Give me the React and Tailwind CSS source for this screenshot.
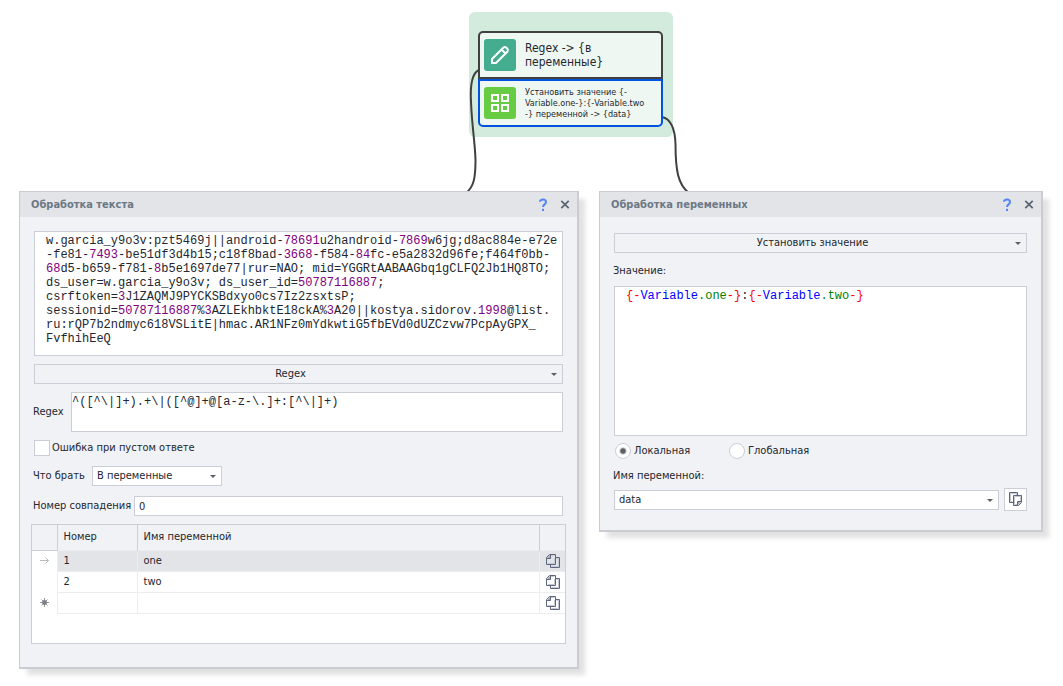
import { useState } from "react";
import clsx from "clsx";

const ACCOUNT_LINES = [
  "w.garcia_y9o3v:pzt5469j||android-78691u2handroid-7869w6jg;d8ac884e-e72e",
  "-fe81-7493-be51df3d4b15;c18f8bad-3668-f584-84fc-e5a2832d96fe;f464f0bb-",
  "68d5-b659-f781-8b5e1697de77|rur=NAO; mid=YGGRtAABAAGbq1gCLFQ2Jb1HQ8TO;",
  "ds_user=w.garcia_y9o3v; ds_user_id=50787116887;",
  "csrftoken=3J1ZAQMJ9PYCKSBdxyo0cs7Iz2zsxtsP;",
  "sessionid=50787116887%3AZLEkhbktE18ckA%3A20||kostya.sidorov.1998@list.",
  "ru:rQP7b2ndmyc618VSLitE|hmac.AR1NFz0mYdkwtiG5fbEVd0dUZCzvw7PcpAyGPX_",
  "FvfhihEeQ"
];

const VARIABLES = [
  { id: 1, name: "one" },
  { id: 2, name: "two" }
];

const App = () => (
  <div className="min-h-screen bg-white font-['DejaVu_Sans_Condensed','DejaVu_Sans',sans-serif] text-[11px] leading-4 text-[#23272f]">
    <div className="pt-3 h-[191px] pl-[469px]">
      <NodeGroup />
    </div>

    <main className="relative grid grid-cols-[140fr_111fr] items-start gap-5 pl-[19px] pr-5">
      <TextPanel />
      <VariablePanel />
    </main>
  </div>
);

/* ---------------- DIAGRAM ---------------- */
const NodeGroup = () => (
  <div className="relative w-[204px] rounded-md bg-[#d3ebdd] pt-[19px] pb-[10px] pl-[9px] pr-[10px]">
    <svg
      className="absolute left-0 top-0 overflow-visible"
      width="204"
      height="180"
      fill="none"
      stroke="#404040"
      strokeWidth="2"
      aria-hidden="true"
    >
      <path d="M10 58C3 61 1 72 2 90C3 115 6 130 6.500 148C6.500 165 5 175 -3 181" />
      <path d="M193 105C202 107 206 117 206.500 132C206.500 158 209 173 220 181" />
    </svg>

    <div className="relative flex h-12 items-center gap-[9px] rounded-t-[5px] border-2 border-[#404040] bg-[#eef7f2] pl-1">
      <span className="flex size-8 shrink-0 items-center justify-center rounded-[3px] bg-[#44ad8f]">
        <svg width="20" height="20" viewBox="0 0 20 20" fill="none" stroke="#fff" strokeWidth="2" aria-hidden="true">
          <path d="M2 18V14L13.500 2.500Q15 1.500 16.500 2.800L17.300 3.600Q18.500 5 17.500 6.500L6 18ZM11.500 4.500L15.500 8.500" />
        </svg>
      </span>
      <p className="text-xs leading-[14px]">
        Regex -&gt; {"{в"}
        <br />
        {"переменные}"}
      </p>
    </div>

    <div className="relative flex h-12 items-center gap-[9px] rounded-b-[5px] border-2 border-[#0052e0] bg-[#eef7f2] pl-1">
      <span className="flex size-8 shrink-0 items-center justify-center rounded-[3px] bg-[#67cb43]">
        <svg width="18" height="18" viewBox="0 0 18 18" fill="none" stroke="#fff" strokeWidth="2" aria-hidden="true">
          <path d="M1 1H7V7H1ZM11 1H17V7H11ZM1 11H7V17H1ZM11 11H17V17H11Z" />
        </svg>
      </span>
      <p className="whitespace-nowrap text-[9px] leading-[11px]">
        {"Установить значение {-"}
        <br />
        {"Variable.one-}:{-Variable.two"}
        <br />
        {"-} переменной -> {data}"}
      </p>
    </div>
  </div>
);

/* ---------------- LEFT WINDOW ---------------- */
const TextPanel = () => {
  const [regex, setRegex] = useState("^([^\\|]+).+\\|([^@]+@[a-z-\\.]+:[^\\|]+)");
  const [match, setMatch] = useState("0");

  return (
    <Panel title="Обработка текста">
      <div className="px-[14px] pt-[14px] pb-[23px]">
        <CodeBox label="Текст" className="h-[125px] pt-[2px]">
          {ACCOUNT_LINES.map(line => (
            <div key={line}>{highlightNumbers(line)}</div>
          ))}
        </CodeBox>

        <Select label="Действие" options={["Regex"]} centered className="mt-2" />

        <div className="mt-2 flex items-center">
          <label htmlFor="regex" className="-ml-px w-[38px]">Regex</label>
          <textarea
            id="regex"
            value={regex}
            onChange={e => setRegex(e.target.value)}
            className="block h-10 min-w-0 flex-1 resize-none border border-[#cbced6] bg-white pt-[2px] font-['Liberation_Mono',monospace] text-xs leading-[14px] outline-none"
          />
        </div>

        <label className="mt-2 flex items-center gap-[2px]">
          <input type="checkbox" className="size-4 appearance-none border border-[#cbced6] bg-white checked:bg-[#5b6270]" />
          Ошибка при пустом ответе
        </label>

        <div className="mt-[10px] flex items-center">
          <label htmlFor="take" className="-ml-px w-[59px]">Что брать</label>
          <Select id="take" options={["В переменные", "В список"]} className="w-[130px] bg-white" />
        </div>

        <div className="mt-[10px] flex items-center">
          <label htmlFor="match" className="-ml-px w-[101px] whitespace-nowrap">Номер совпадения</label>
          <input
            id="match"
            value={match}
            onChange={e => setMatch(e.target.value)}
            className="h-5 min-w-0 flex-1 border border-[#cbced6] bg-white px-1 outline-none"
          />
        </div>

        <VariableTable />
      </div>
    </Panel>
  );
};

const VariableTable = () => (
  <div className="-mx-[3px] mt-2 h-[120px] border border-[#cbced6] bg-white">
    <table className="w-full table-fixed border-collapse text-left">
      <colgroup>
        <col className="w-[25px]" />
        <col className="w-20" />
        <col />
        <col className="w-[26px]" />
      </colgroup>
      <thead>
        <tr className="h-[25px] border-b border-[#cbced6] bg-[#f1f2f6]">
          <th className="border-r border-[#cbced6]" />
          <th className="border-r border-[#cbced6] px-[6px] font-normal">Номер</th>
          <th className="border-r border-[#cbced6] px-[6px] font-normal">Имя переменной</th>
          <th />
        </tr>
      </thead>
      <tbody>
        {VARIABLES.map((item, i) => (
          <Row key={item.id} item={item} active={i === 0} marker={i === 0 && <ArrowMark />} />
        ))}
        <Row marker={<NewMark />} />
      </tbody>
    </table>
  </div>
);

const Row = ({ item, active, marker }) => {
  const cell = clsx("border border-[#ecedf0] px-[6px] leading-4", active && "bg-[#e3e4e8]");

  return (
    <tr className="h-[21px]">
      <td className="p-0"><span className="flex justify-center">{marker}</span></td>
      <td className={cell}>{item?.id}</td>
      <td className={cell}>{item?.name}</td>
      <td className={clsx("border-y border-[#ecedf0] p-0", active && "bg-[#e3e4e8]")}>
        <button type="button" aria-label="Копировать" className="flex w-full pl-[6px]">
          <PagesIcon />
        </button>
      </td>
    </tr>
  );
};

/* ---------------- RIGHT WINDOW ---------------- */
const VariablePanel = () => {
  const [scope, setScope] = useState("local");

  return (
    <Panel title="Обработка переменных">
      <div className="px-[14px] pt-4 pb-[19px]">
        <Select label="Действие" options={["Установить значение"]} centered />

        <p className="-ml-px mt-[10px]">Значение:</p>
        <CodeBox label="Значение" className="mt-[7px] h-[150px] pt-[2px]">
          <Macro name="one" />:<Macro name="two" />
        </CodeBox>

        <div className="mt-[7px] flex pl-px">
          <Radio name="scope" checked={scope === "local"} onChange={() => setScope("local")} className="w-[114px]">
            Локальная
          </Radio>
          <Radio name="scope" checked={scope === "global"} onChange={() => setScope("global")}>
            Глобальная
          </Radio>
        </div>

        <label htmlFor="variable" className="-ml-px mt-[9px] block">Имя переменной:</label>
        <div className="mt-1 flex items-center gap-[5px]">
          <Select id="variable" options={["data"]} className="flex-1 bg-white" />
          <button
            type="button"
            aria-label="Вставить"
            className="flex size-[23px] items-center justify-center border border-[#cbced6] bg-white"
          >
            <PasteIcon />
          </button>
        </div>
      </div>
    </Panel>
  );
};

/* ---------------- SHARED ---------------- */
const Panel = ({ title, children }) => (
  <section className="min-w-0 border border-r-2 border-b-2 border-[#cbccd2] bg-[#f1f2f6] shadow-[7px_7px_5px_-1px_rgba(0,0,0,0.12)]">
    <header className="flex h-[25px] items-center justify-between bg-[#e3e4e8] pl-[11px] pr-[7px]">
      <h2 className="font-bold text-[#6c7885]">{title}</h2>
      <div className="flex items-center gap-3">
        <button type="button" aria-label="Справка">
          <svg width="10" height="14" viewBox="0 0 10 14" fill="none" stroke="#5286f5" strokeWidth="2" aria-hidden="true">
            <path d="M2 3.800C2 0.800 8 0.800 8 4C8 6.500 5 6.200 5 9M5 10.800V13" />
          </svg>
        </button>
        <button type="button" aria-label="Закрыть">
          <svg width="10" height="10" viewBox="0 0 10 10" fill="none" stroke="#5b6473" strokeWidth="1.700" aria-hidden="true">
            <path d="M1.300 0.800L8.700 8.200M8.700 0.800L1.300 8.200" />
          </svg>
        </button>
      </div>
    </header>
    {children}
  </section>
);

const CodeBox = ({ label, className, children }) => (
  <div
    role="textbox"
    aria-label={label}
    aria-multiline="true"
    contentEditable
    suppressContentEditableWarning
    spellCheck={false}
    className={clsx(
      "overflow-hidden whitespace-pre border border-[#cbced6] bg-white pl-[11px] font-['Liberation_Mono',monospace] text-xs leading-[14px] outline-none",
      className
    )}
  >
    {children}
  </div>
);

const Select = ({ id, label, options, centered, className }) => (
  <div className={clsx("relative h-5 border border-[#cbced6]", className)}>
    <select
      id={id}
      aria-label={label}
      className={clsx(
        "block h-full w-full appearance-none bg-transparent pl-1 pr-5 outline-none",
        centered && "[text-align-last:center]"
      )}
    >
      {options.map(option => (
        <option key={option}>{option}</option>
      ))}
    </select>
    <svg className="pointer-events-none absolute right-[5px] top-2" width="6" height="3" viewBox="0 0 6 3" fill="#5b6068" aria-hidden="true">
      <path d="M0 0H6L3 3Z" />
    </svg>
  </div>
);

const Radio = ({ className, children, ...props }) => (
  <label className={clsx("flex items-center gap-[3px]", className)}>
    <input
      type="radio"
      {...props}
      className="size-4 appearance-none rounded-full border border-[#cbced6] bg-white checked:bg-[radial-gradient(circle,#5b6068_2px,#fff_4px)]"
    />
    {children}
  </label>
);

const Macro = ({ name }) => (
  <span className="text-[#008000]">
    <span className="text-[#ff0000]">{"{-"}</span>
    <span className="text-[#0000ff]">Variable</span>.{name}
    <span className="text-[#ff0000]">{"-}"}</span>
  </span>
);

// numbers are coloured only at the start of a token
const highlightNumbers = line =>
  line.split(/((?<!\w)\d+)/).map((part, i) => (
    i % 2 ? <span key={i} className="text-[#800080]">{part}</span> : part
  ));

/* ---------------- ICONS ---------------- */
const PagesIcon = () => (
  <svg width="14" height="14" viewBox="0 0 14 14" fill="none" aria-hidden="true">
    <path d="M8.500 4V9.500H1.500M4.500 1.500H8.500M12.500 4.500V12.500H5.500M10.500 4.500H12.500" stroke="#c3c8d3" />
    <path d="M4.500 0.500V4.500H0.500Z" fill="#a3aaba" />
    <path d="M3.500 0.500H9.500V10.500H0.500V3.500ZM4.500 0.500V4.500H0.500M9.500 3.500H13.500V13.500H4.500V10.500" stroke="#5d667c" />
  </svg>
);

const PasteIcon = () => (
  <svg width="14" height="15" viewBox="0 0 14 15" fill="none" aria-hidden="true">
    <path d="M1.500 9.500V1.500H7.500V3M3.500 9.500H1.500M5.500 12.500V4.500H11.500V9M5.500 12.500H8" stroke="#c3c8d3" />
    <path d="M12.500 9.500H8.500V13.500Z" fill="#a3aaba" />
    <path d="M4.500 10.500H0.500V0.500H8.500V3.500M4.500 3.500H12.500V10.500L9.500 13.500H4.500ZM12.500 9.500H8.500V13.500" stroke="#5d667c" />
  </svg>
);

const ArrowMark = () => (
  <svg width="9" height="7" viewBox="0 0 9 7" fill="none" stroke="#b9bbc0" aria-hidden="true">
    <path d="M0 3.500H8.500M5.500 0.500L8.500 3.500L5.500 6.500" />
  </svg>
);

const NewMark = () => (
  <svg width="9" height="9" viewBox="0 0 9 9" fill="#7d8087" stroke="#7d8087" aria-hidden="true">
    <circle cx="4.500" cy="4.500" r="2" />
    <path d="M4.500 0V9M0 4.500H9M1.500 1.500L7.500 7.500M7.500 1.500L1.500 7.500" strokeWidth="0.800" />
  </svg>
);

export default App;
